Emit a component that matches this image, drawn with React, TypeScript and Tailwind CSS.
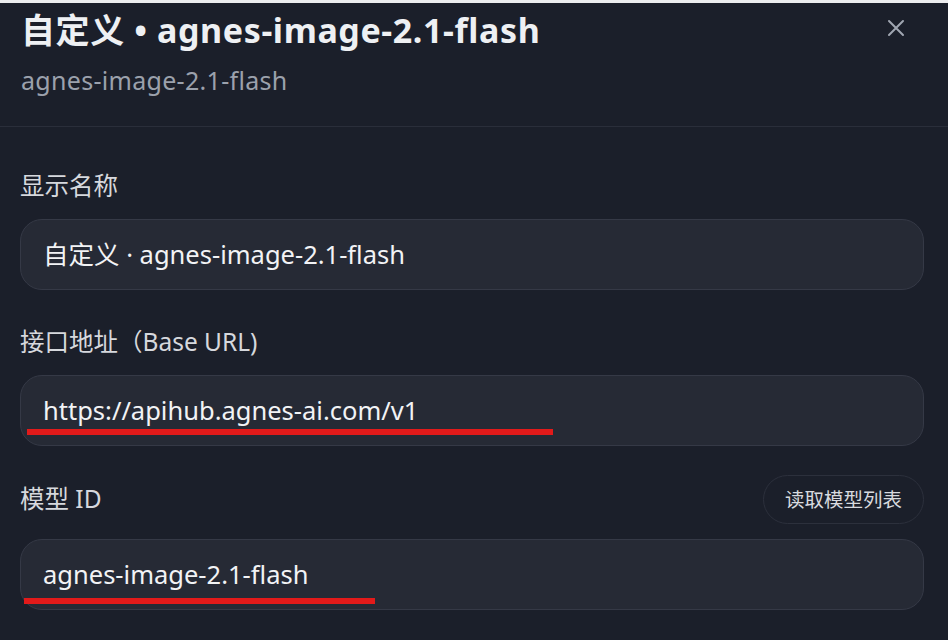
import React from "react";

const FONT = "font-['Noto_Sans','Noto_Sans_CJK_SC',sans-serif]";

function Field({ value, underline }: { value: string; underline?: { left: number; top: number; width: number } }) {
  return (
    <div className="relative h-[71px] w-full rounded-[22px] border border-[#353946] bg-[#262a35] flex items-center pl-[22px]">
      <span className="text-[25.5px] leading-none text-[#f2f3f5]">{value}</span>
      {underline && (
        <div
          className="absolute h-[6px] bg-[#e21a1a]"
          style={{ left: underline.left, top: underline.top, width: underline.width }}
        />
      )}
    </div>
  );
}

export default function App() {
  return (
    <div className={`${FONT} w-[948px] h-[640px] overflow-hidden bg-[#1b1f2a]`}>
      <div className="h-[3px] bg-[#ececee]" />
      <div className="relative h-[124px] border-b border-[#2a2e3a] pl-[21px]">
        <div className="pt-[5px] text-[34px] leading-[44px] font-bold tracking-[0.6px] text-[#eef0f3]">
          自定义 • agnes-image-2.1-flash
        </div>
        <div className="mt-[13px] text-[25px] leading-[30px] tracking-[0.3px] text-[#9ba1ac]">agnes-image-2.1-flash</div>
        <button className="absolute left-[886px] top-[15px] flex h-[20px] w-[20px] items-center justify-center text-[#a0a6b1]">
          <svg width="18" height="18" viewBox="0 0 18 18" fill="none" stroke="currentColor" strokeWidth="2" strokeLinecap="round">
            <path d="M2 2 L16 16 M16 2 L2 16" />
          </svg>
        </button>
      </div>
      <div className="px-[20px] w-[944px]">
        <div className="mt-[43px] h-[32px] flex items-center text-[24.5px] text-[#d6d8dd]">显示名称</div>
        <div className="mt-[17px]">
          <Field value="自定义 · agnes-image-2.1-flash" />
        </div>
        <div className="mt-[36px] h-[32px] flex items-center text-[24.5px] text-[#d6d8dd]">接口地址（Base URL)</div>
        <div className="mt-[17px]">
          <Field value="https://apihub.agnes-ai.com/v1" underline={{ left: 6, top: 53, width: 526 }} />
        </div>
        <div className="mt-[29px] flex h-[49px] items-center justify-between">
          <span className="text-[24.5px] text-[#d6d8dd]">模型 ID</span>
          <button className="h-[49px] w-[161px] rounded-full border border-[#2c303c] bg-[#1b1f2a] text-[19.5px] text-[#d8dadf]">
            读取模型列表
          </button>
        </div>
        <div className="mt-[15px]">
          <Field value="agnes-image-2.1-flash" underline={{ left: 3, top: 58, width: 351 }} />
        </div>
      </div>
    </div>
  );
}
